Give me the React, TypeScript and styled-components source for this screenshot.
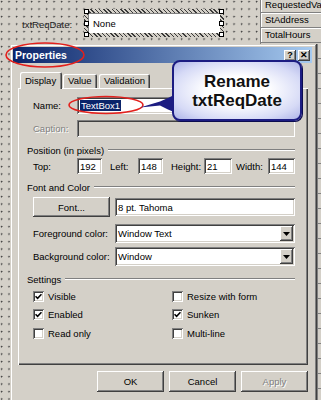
import React from 'react'
import styled, { createGlobalStyle, css } from 'styled-components'

const face = '#d4d0c8'

const GlobalStyle = createGlobalStyle`
  html, body { margin: 0; padding: 0; }
  body {
    font-family: "Liberation Sans", Arial, sans-serif;
    font-size: 9.5px;
    color: #000;
  }
`

const raised = css`
  box-shadow: inset -1px -1px #404040, inset 1px 1px #ffffff,
    inset -2px -2px #808080, inset 2px 2px ${face};
`

const sunken = css`
  box-shadow: inset 1px 1px #808080, inset -1px -1px #ffffff,
    inset 2px 2px #404040, inset -2px -2px ${face};
`

const Page = styled.div`
  position: relative;
  width: 321px;
  height: 400px;
  overflow: hidden;
  background-color: ${face};
  background-image: radial-gradient(circle at 1.5px 1.5px, #3c3c3c 0.7px, transparent 1.1px);
  background-size: 7.5px 7.5px;
`

const TopArea = styled.div`
  display: flex;
  height: 44px;
`

const Surface = styled.div`
  flex: 1;
  display: flex;
  align-items: flex-start;
`

const FieldCaption = styled.span`
  margin: 19px 0 0 22px;
  width: 62px;
  line-height: 12px;
  color: #222;
`

const SelectionFrame = styled.div`
  position: relative;
  box-sizing: border-box;
  margin-top: 9px;
  width: 140px;
  height: 28px;
  padding: 4px;
  background: repeating-linear-gradient(45deg, #3a3a3a 0 1px, ${face} 1px 3px);
`

const BoundField = styled.div`
  box-sizing: border-box;
  height: 100%;
  background: #fff;
  border-top: 1px solid #808080;
  border-left: 1px solid #808080;
  padding-left: 4px;
  line-height: 19px;
`

const Handle = styled.span<{ $side: 'left' | 'right'; $top: number }>`
  position: absolute;
  ${(p) => (p.$side === 'left' ? 'left: 0;' : 'right: 0;')}
  top: ${(p) => p.$top}px;
  box-sizing: border-box;
  width: 5px;
  height: 5px;
  background: #fff;
  border: 1px solid #000;
`

const FieldList = styled.div`
  width: 60px;
  display: flex;
  flex-direction: column;
  background: ${face};
  border-left: 1px solid #808080;
  overflow: hidden;
`

const FieldRow = styled.div`
  height: 14px;
  line-height: 14px;
  padding-left: 4px;
  white-space: nowrap;
  border-bottom: 1px solid #808080;
  box-shadow: inset 0 1px #fff, inset 1px 0 #fff;
  &:first-child { margin-top: -2px; }
`

const MainRow = styled.div`
  display: flex;
  align-items: flex-start;
`

const Dialog = styled.div`
  box-sizing: border-box;
  margin-left: 10px;
  width: 307px;
  height: 360px;
  padding: 3px 5px 0 3px;
  background: ${face};
  box-shadow: inset -1px -1px #404040, inset 1px 1px ${face},
    inset -2px -2px #808080, inset 2px 2px #ffffff;
`

const ListStrip = styled.div`
  flex: 1;
  height: 360px;
  border-left: 1px solid #808080;
  background: repeating-linear-gradient(to bottom, ${face} 0 14px, #808080 14px 15px);
`

const TitleBar = styled.div`
  display: flex;
  align-items: center;
  height: 16px;
  padding: 0 2px;
  background: linear-gradient(to right, #0a246a, #a6caf0);
`

const TitleText = styled.span`
  flex: 1;
  font-size: 10.5px;
  font-weight: bold;
  color: #fff;
`

const TitleButton = styled.span`
  box-sizing: border-box;
  width: 12px;
  height: 11px;
  margin-left: 2px;
  background: ${face};
  ${raised};
  font-size: 9px;
  font-weight: bold;
  line-height: 11px;
  text-align: center;
`

const Body = styled.div`
  padding: 0 4px 0 5px;
`

const TabRow = styled.div`
  position: relative;
  z-index: 1;
  display: flex;
  align-items: flex-end;
  height: 16px;
  margin-top: 9px;
  padding-left: 2px;
`

const Tab = styled.div<{ $active?: boolean; $w: number; $ml: number }>`
  box-sizing: border-box;
  width: ${(p) => p.$w}px;
  margin-left: ${(p) => p.$ml}px;
  height: ${(p) => (p.$active ? 17 : 14)}px;
  margin-bottom: ${(p) => (p.$active ? -1 : 0)}px;
  padding: ${(p) => (p.$active ? 3 : 1)}px 0 0 5px;
  line-height: 12px;
  background: ${face};
  border-radius: 2px 2px 0 0;
  box-shadow: inset 1px 1px #fff, inset -1px 0 #404040, inset -2px 0 #808080;
`

const Panel = styled.div`
  box-sizing: border-box;
  height: 277px;
  padding: 9px 13px 0 15px;
  display: flex;
  flex-direction: column;
  box-shadow: inset 1px 1px #fff, inset -1px -1px #404040, inset -2px -2px #808080;
`

const FormRow = styled.div<{ $mt: number; $h: number }>`
  display: flex;
  align-items: center;
  margin-top: ${(p) => p.$mt}px;
  height: ${(p) => p.$h}px;
`

const Label = styled.span<{ $w: number; $ml?: number; $disabled?: boolean }>`
  flex: none;
  width: ${(p) => p.$w}px;
  margin-left: ${(p) => p.$ml ?? 0}px;
  color: ${(p) => (p.$disabled ? '#808080' : '#000')};
  text-shadow: ${(p) => (p.$disabled ? '1px 1px #fff' : 'none')};
`

const TextInput = styled.div<{ $w?: number; $ml?: number; $disabled?: boolean }>`
  box-sizing: border-box;
  display: flex;
  align-items: center;
  height: 100%;
  ${(p) => (p.$w ? `width: ${p.$w}px; flex: none;` : 'flex: 1;')}
  margin-left: ${(p) => p.$ml ?? 0}px;
  padding-left: 3px;
  background: ${(p) => (p.$disabled ? face : '#fff')};
  ${sunken};
`

const Selection = styled.span`
  background: #0a246a;
  color: #fff;
  padding: 0 1px;
  line-height: 11px;
`

const SelectArrow = styled.span`
  box-sizing: border-box;
  display: flex;
  align-items: center;
  justify-content: center;
  width: 13px;
  height: 15px;
  margin: 0 2px 0 auto;
  background: ${face};
  ${raised};
`

const GroupHeader = styled.div`
  display: flex;
  align-items: center;
  height: 12px;
  margin: 7px 0 0 -6px;
`

const GroupRule = styled.span`
  flex: 1;
  margin-left: 4px;
  border-top: 1px solid #808080;
  border-bottom: 1px solid #fff;
`

const PushButton = styled.div<{ $w: number; $disabled?: boolean }>`
  box-sizing: border-box;
  display: flex;
  align-items: center;
  justify-content: center;
  flex: none;
  width: ${(p) => p.$w}px;
  height: 100%;
  background: ${face};
  ${raised};
  color: ${(p) => (p.$disabled ? '#808080' : '#000')};
  text-shadow: ${(p) => (p.$disabled ? '1px 1px #fff' : 'none')};
`

const CheckGrid = styled.div`
  display: grid;
  grid-template-columns: 139px 1fr;
  grid-auto-rows: 12px;
  row-gap: 6.5px;
  margin-top: 5px;
`

const CheckItem = styled.div`
  display: flex;
  align-items: center;
  gap: 4px;
`

const CheckBox = styled.span`
  box-sizing: border-box;
  display: flex;
  align-items: center;
  justify-content: center;
  width: 11px;
  height: 11px;
  background: #fff;
  ${sunken};
`

const ButtonRow = styled.div`
  display: flex;
  justify-content: flex-end;
  gap: 5px;
  height: 21px;
  margin-top: 6px;
`

const Overlay = styled.div`
  position: absolute;
  inset: 0;
  pointer-events: none;
`

const Callout = styled.div`
  position: absolute;
  left: 172px;
  top: 60px;
  box-sizing: border-box;
  width: 130px;
  height: 61px;
  display: flex;
  flex-direction: column;
  align-items: center;
  justify-content: center;
  border: 2px solid #1c1c82;
  border-radius: 8px;
  background: radial-gradient(ellipse at 50% 50%, #ffffff 35%, #d6daf6 75%, #aeb4e8 100%);
  box-shadow: 1px 1px 0 #0c0c50;
  font-size: 17px;
  font-weight: bold;
  line-height: 19px;
  color: #111;
`

function Check() {
  return (
    <svg width="7" height="7" viewBox="0 0 7 7">
      <path d="M0.5 3.2 L2.6 5.3 L6.5 1.2" fill="none" stroke="#000" strokeWidth="1.6" />
    </svg>
  )
}

function Checkbox({ label, checked }: { label: string; checked?: boolean }) {
  return (
    <CheckItem>
      <CheckBox>{checked && <Check />}</CheckBox>
      <span>{label}</span>
    </CheckItem>
  )
}

function Select({ value }: { value: string }) {
  return (
    <TextInput>
      {value}
      <SelectArrow>
        <svg width="7" height="4" viewBox="0 0 7 4">
          <path d="M0 0 H7 L3.5 4 Z" fill="#000" />
        </svg>
      </SelectArrow>
    </TextInput>
  )
}

export default function App() {
  return (
    <>
      <GlobalStyle />
      <Page>
        <TopArea>
          <Surface>
            <FieldCaption>txtReqDate:</FieldCaption>
            <SelectionFrame>
              <BoundField>None</BoundField>
              <Handle $side="left" $top={0} />
              <Handle $side="left" $top={12} />
              <Handle $side="left" $top={23} />
              <Handle $side="right" $top={0} />
              <Handle $side="right" $top={12} />
              <Handle $side="right" $top={23} />
            </SelectionFrame>
          </Surface>
          <FieldList>
            <FieldRow>RequestedVa</FieldRow>
            <FieldRow>StAddress</FieldRow>
            <FieldRow>TotalHours</FieldRow>
          </FieldList>
        </TopArea>

        <MainRow>
          <Dialog>
            <TitleBar>
              <TitleText>Properties</TitleText>
              <TitleButton>?</TitleButton>
              <TitleButton>✕</TitleButton>
            </TitleBar>
            <Body>
              <TabRow>
                <Tab $active $w={42} $ml={0}>Display</Tab>
                <Tab $w={34} $ml={1}>Value</Tab>
                <Tab $w={51} $ml={2}>Validation</Tab>
              </TabRow>
              <Panel>
                <FormRow $mt={0} $h={17}>
                  <Label $w={44}>Name:</Label>
                  <TextInput>
                    <Selection>TextBox1</Selection>
                  </TextInput>
                </FormRow>
                <FormRow $mt={6} $h={17}>
                  <Label $w={44} $disabled>Caption:</Label>
                  <TextInput $disabled />
                </FormRow>

                <GroupHeader>
                  Position (in pixels)
                  <GroupRule />
                </GroupHeader>
                <FormRow $mt={2} $h={16}>
                  <Label $w={44}>Top:</Label>
                  <TextInput $w={25}>192</TextInput>
                  <Label $w={28} $ml={8}>Left:</Label>
                  <TextInput $w={25}>148</TextInput>
                  <Label $w={33} $ml={8}>Height:</Label>
                  <TextInput $w={28}>21</TextInput>
                  <Label $w={32} $ml={4}>Width:</Label>
                  <TextInput $w={27}>144</TextInput>
                </FormRow>

                <GroupHeader>
                  Font and Color
                  <GroupRule />
                </GroupHeader>
                <FormRow $mt={4} $h={20}>
                  <PushButton $w={77}>Font...</PushButton>
                  <TextInput $ml={5} style={{ height: 18 }}>8 pt. Tahoma</TextInput>
                </FormRow>
                <FormRow $mt={7} $h={19}>
                  <Label $w={82}>Foreground color:</Label>
                  <Select value="Window Text" />
                </FormRow>
                <FormRow $mt={4} $h={19}>
                  <Label $w={82}>Background color:</Label>
                  <Select value="Window" />
                </FormRow>

                <GroupHeader>
                  Settings
                  <GroupRule />
                </GroupHeader>
                <CheckGrid>
                  <Checkbox label="Visible" checked />
                  <Checkbox label="Resize with form" />
                  <Checkbox label="Enabled" checked />
                  <Checkbox label="Sunken" checked />
                  <Checkbox label="Read only" />
                  <Checkbox label="Multi-line" />
                </CheckGrid>
              </Panel>
              <ButtonRow>
                <PushButton $w={67}>OK</PushButton>
                <PushButton $w={67}>Cancel</PushButton>
                <PushButton $w={67} $disabled>Apply</PushButton>
              </ButtonRow>
            </Body>
          </Dialog>
          <ListStrip />
        </MainRow>

        <Overlay>
          <svg width="321" height="400" viewBox="0 0 321 400" style={{ position: 'absolute', left: 0, top: 0 }}>
            <ellipse cx="45" cy="55" rx="39" ry="12" fill="none" stroke="#e3201c" strokeWidth="1.6" />
            <ellipse cx="106" cy="105" rx="37" ry="8.5" fill="none" stroke="#e3201c" strokeWidth="1.6" />
            <path d="M140 107.5 L160 101.5 L168 98 L174 95 L174 112 L168 109.5 L160 105.5 Z" fill="#1c1c82" />
          </svg>
          <Callout>
            <span>Rename</span>
            <span>txtReqDate</span>
          </Callout>
        </Overlay>
      </Page>
    </>
  )
}
